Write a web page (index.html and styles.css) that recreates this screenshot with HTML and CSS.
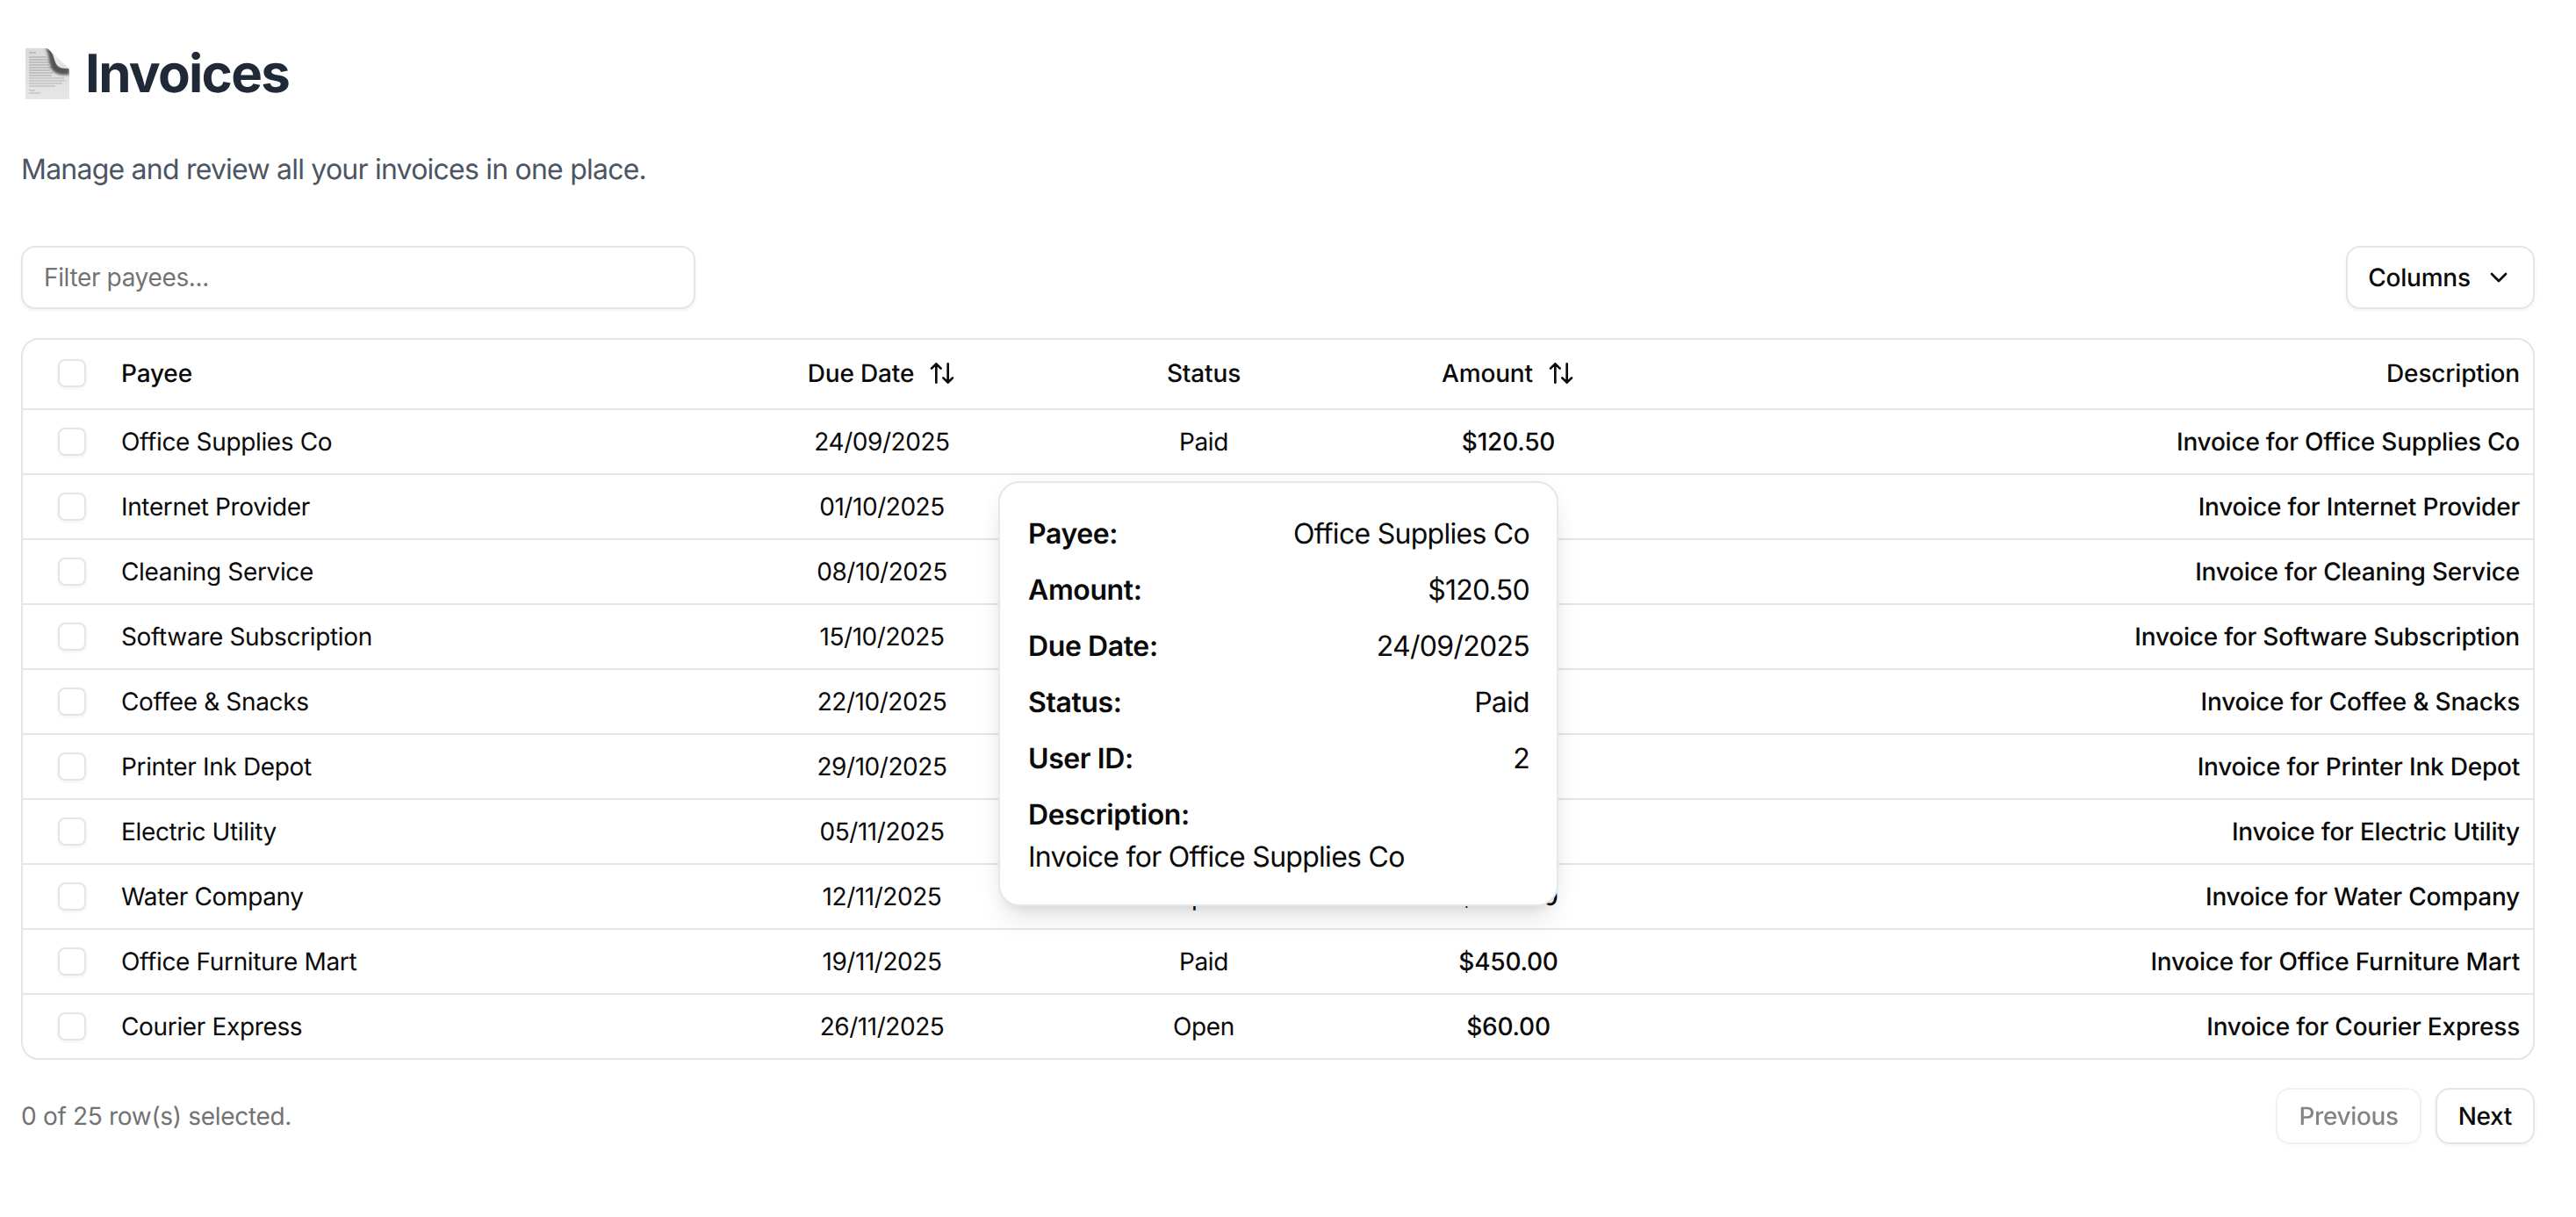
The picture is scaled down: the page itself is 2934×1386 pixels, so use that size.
FILE: index.html
```html
<!DOCTYPE html>
<html lang="en">
<head>
<meta charset="utf-8">
<title>Invoices</title>
<link rel="stylesheet" href="styles.css">
</head>
<body>
<main class="page">
  <h1 class="title">
    <svg class="doc" viewBox="0 0 50 58" width="50" height="58" aria-hidden="true">
      <defs>
        <linearGradient id="paper" x1="0" y1="0" x2="0" y2="1"><stop offset="0" stop-color="#dadada"/><stop offset="1" stop-color="#e6e6e6"/></linearGradient>
        <linearGradient id="flap" x1="0" y1="0" x2="1" y2="1"><stop offset="0" stop-color="#f4f4f4"/><stop offset="1" stop-color="#dedede"/></linearGradient>
        <filter id="soft" x="-30%" y="-30%" width="160%" height="160%"><feGaussianBlur stdDeviation="1.5"/></filter>
        <filter id="softer"><feGaussianBlur stdDeviation="0.5"/></filter>
        <clipPath id="sheet"><path d="M0 0H25L50 24V58H0Z"/></clipPath>
      </defs>
      <path d="M0 0H25L50 24V58H0Z" fill="url(#paper)"/>
      <g clip-path="url(#sheet)">
        <g stroke="#9a9a9a" stroke-width="0.9" filter="url(#softer)">
          <path d="M4 5h8M4 10h20M4 13h22M4 16h25M4 19h23M4 22h26M4 25h24M4 28h27M4 31h26"/>
          <path d="M4 34h40M4 37h42M4 40h38M4 43h30M4 48h7M4 51h13" opacity=".7"/>
        </g>
        <path d="M23 0H29C34 6 34 14 38 20L50 22V30C42 31 34 30 30 24C26 16 27 6 23 0Z" fill="#555" filter="url(#soft)"/>
      </g>
      <path d="M27 1L49 23C45 23 41 23 38 21C32 17 34 8 27 1Z" fill="url(#flap)"/>
    </svg>
    <span>Invoices</span>
  </h1>
  <p class="lead">Manage and review all your invoices in one place.</p>

  <div class="toolbar">
    <input class="filter" type="text" placeholder="Filter payees...">
    <button class="btn btn-columns" type="button">Columns
      <svg class="ico" viewBox="0 0 24 24" width="32" height="32" aria-hidden="true"><path d="m6 9 6 6 6-6"/></svg>
    </button>
  </div>

  <div class="table-wrap">
    <table class="grid">
      <colgroup>
        <col class="c-check"><col class="c-payee"><col class="c-date"><col class="c-status"><col class="c-amount"><col>
      </colgroup>
      <thead>
        <tr>
          <th class="cell-check"><span class="box"></span></th>
          <th class="left">Payee</th>
          <th><span class="sort">Due Date <svg class="ico" viewBox="0 0 24 24" width="32" height="32" aria-hidden="true"><path d="m21 16-4 4-4-4M17 20V4M3 8l4-4 4 4M7 4v16"/></svg></span></th>
          <th>Status</th>
          <th><span class="sort">Amount <svg class="ico" viewBox="0 0 24 24" width="32" height="32" aria-hidden="true"><path d="m21 16-4 4-4-4M17 20V4M3 8l4-4 4 4M7 4v16"/></svg></span></th>
          <th class="right">Description</th>
        </tr>
      </thead>
      <tbody>
        <tr><td class="cell-check"><span class="box"></span></td><td class="left">Office Supplies Co</td><td class="date">24/09/2025</td><td>Paid</td><td class="med">$120.50</td><td class="right med">Invoice for Office Supplies Co</td></tr>
        <tr><td class="cell-check"><span class="box"></span></td><td class="left">Internet Provider</td><td class="date">01/10/2025</td><td>Open</td><td class="med">$80.00</td><td class="right med">Invoice for Internet Provider</td></tr>
        <tr><td class="cell-check"><span class="box"></span></td><td class="left">Cleaning Service</td><td class="date">08/10/2025</td><td>Paid</td><td class="med">$200.00</td><td class="right med">Invoice for Cleaning Service</td></tr>
        <tr><td class="cell-check"><span class="box"></span></td><td class="left">Software Subscription</td><td class="date">15/10/2025</td><td>Open</td><td class="med">$49.99</td><td class="right med">Invoice for Software Subscription</td></tr>
        <tr><td class="cell-check"><span class="box"></span></td><td class="left">Coffee &amp; Snacks</td><td class="date">22/10/2025</td><td>Paid</td><td class="med">$35.75</td><td class="right med">Invoice for Coffee &amp; Snacks</td></tr>
        <tr><td class="cell-check"><span class="box"></span></td><td class="left">Printer Ink Depot</td><td class="date">29/10/2025</td><td>Open</td><td class="med">$95.00</td><td class="right med">Invoice for Printer Ink Depot</td></tr>
        <tr><td class="cell-check"><span class="box"></span></td><td class="left">Electric Utility</td><td class="date">05/11/2025</td><td>Paid</td><td class="med">$150.25</td><td class="right med">Invoice for Electric Utility</td></tr>
        <tr><td class="cell-check"><span class="box"></span></td><td class="left">Water Company</td><td class="date">12/11/2025</td><td>Open</td><td class="med">$300.00</td><td class="right med">Invoice for Water Company</td></tr>
        <tr><td class="cell-check"><span class="box"></span></td><td class="left">Office Furniture Mart</td><td class="date">19/11/2025</td><td>Paid</td><td class="med">$450.00</td><td class="right med">Invoice for Office Furniture Mart</td></tr>
        <tr><td class="cell-check"><span class="box"></span></td><td class="left">Courier Express</td><td class="date">26/11/2025</td><td>Open</td><td class="med">$60.00</td><td class="right med">Invoice for Courier Express</td></tr>
      </tbody>
    </table>
  </div>

  <div class="footer">
    <span class="count">0 of 25 row(s) selected.</span>
    <div class="pager">
      <button class="btn btn-page is-disabled" type="button">Previous</button>
      <button class="btn btn-page" type="button">Next</button>
    </div>
  </div>

  <aside class="card">
    <div class="card-row"><strong>Payee:</strong><span>Office Supplies Co</span></div>
    <div class="card-row"><strong>Amount:</strong><span>$120.50</span></div>
    <div class="card-row"><strong>Due Date:</strong><span>24/09/2025</span></div>
    <div class="card-row"><strong>Status:</strong><span>Paid</span></div>
    <div class="card-row"><strong>User ID:</strong><span>2</span></div>
    <div class="card-desc"><strong>Description:</strong><span>Invoice for Office Supplies Co</span></div>
  </aside>
</main>
</body>
</html>
```

FILE: styles.css
```css
* { box-sizing: border-box; }
html, body { margin: 0; background: #fff; }
body { font-family: Inter, "Liberation Sans", sans-serif; color: #0a0a0a; font-size: 28px; text-rendering: geometricPrecision; }

.page { position: relative; padding: 48px 47px 0 24px; min-height: 1386px; }

.title { display: flex; align-items: center; gap: 18px; margin: 0; height: 72px; padding-left: 5px; font-size: 60px; line-height: 74px; font-weight: 700; color: #1f2937; letter-spacing: -1.7px; }
.doc { flex: none; }

.lead { margin: 49px 0 0; font-size: 32px; line-height: 48px; color: #4b5563; letter-spacing: -0.78px; }

.toolbar { display: flex; justify-content: space-between; align-items: center; margin-top: 64px; height: 70px; }
.filter { width: 768px; height: 72px; padding: 0 24px; border: 2px solid #e5e5e5; border-radius: 16px; background: #fff; font: 400 28px Inter, sans-serif; letter-spacing: -0.36px; color: #0a0a0a; box-shadow: 0 2px 4px rgba(0,0,0,.05); outline: none; }
.filter::placeholder { color: #737373; opacity: 1; }

.btn { font: 500 28px Inter, sans-serif; letter-spacing: -0.2px; color: #0a0a0a; background: #fff; border: 2px solid #e5e5e5; border-radius: 16px; box-shadow: 0 2px 4px rgba(0,0,0,.05); padding: 0; text-rendering: geometricPrecision; }
.btn-columns { display: flex; align-items: center; justify-content: center; gap: 16px; width: 215px; height: 72px; }

.ico { flex: none; fill: none; stroke: currentColor; stroke-width: 2; stroke-linecap: round; stroke-linejoin: round; }

.table-wrap { margin-top: 34px; border: 2px solid #e5e5e5; border-radius: 20px; overflow: hidden; }
.grid { width: 100%; border-collapse: separate; border-spacing: 0; table-layout: fixed; }
.c-check { width: 96px; }
.c-payee { width: 679px; }
.c-date { width: 407px; }
.c-status { width: 326px; }
.c-amount { width: 368px; }

.grid th, .grid td { padding: 0; text-align: center; font-size: 28px; border-bottom: 2px solid #e5e5e5; }
.grid th { height: 80px; padding-bottom: 2px; font-weight: 500; letter-spacing: -0.17px; }
.grid td { height: 74px; font-weight: 400; letter-spacing: -0.35px; }
.grid tbody tr:last-child td { height: 72px; border-bottom: 0; }
.grid .left { text-align: left; padding-left: 16px; }
.grid .right { text-align: right; padding-right: 15px; }
.grid .med { font-weight: 500; letter-spacing: -0.22px; }
.grid .date { letter-spacing: -0.45px; }
.grid .cell-check { text-align: left; padding-left: 40px; }
.box { display: block; width: 32px; height: 32px; border: 2px solid #e5e5e5; border-radius: 8px; box-shadow: 0 2px 4px rgba(0,0,0,.05); }
.sort { display: inline-flex; align-items: center; gap: 16px; }

.footer { display: flex; justify-content: space-between; align-items: center; margin-top: 32px; height: 64px; }
.count { color: #737373; letter-spacing: -0.31px; }
.pager { display: flex; gap: 16px; }
.btn-page { height: 64px; padding: 0 24px; letter-spacing: -0.35px; }
.is-disabled { opacity: .5; }

.card { position: absolute; left: 1137px; top: 548px; width: 638px; height: 484px; padding: 34px 31px 0 32px; background: #fff; border: 2px solid #e5e7eb; border-radius: 24px; box-shadow: 0 20px 30px -6px rgba(0,0,0,.1), 0 8px 12px -8px rgba(0,0,0,.1), 0 0 24px rgba(0,0,0,.03); font-size: 32px; line-height: 48px; letter-spacing: -0.72px; }
.card strong { font-weight: 600; letter-spacing: -0.4px; }
.card-row { display: flex; justify-content: space-between; height: 48px; margin-bottom: 16px; }
.card-desc { display: flex; flex-direction: column; }
```
